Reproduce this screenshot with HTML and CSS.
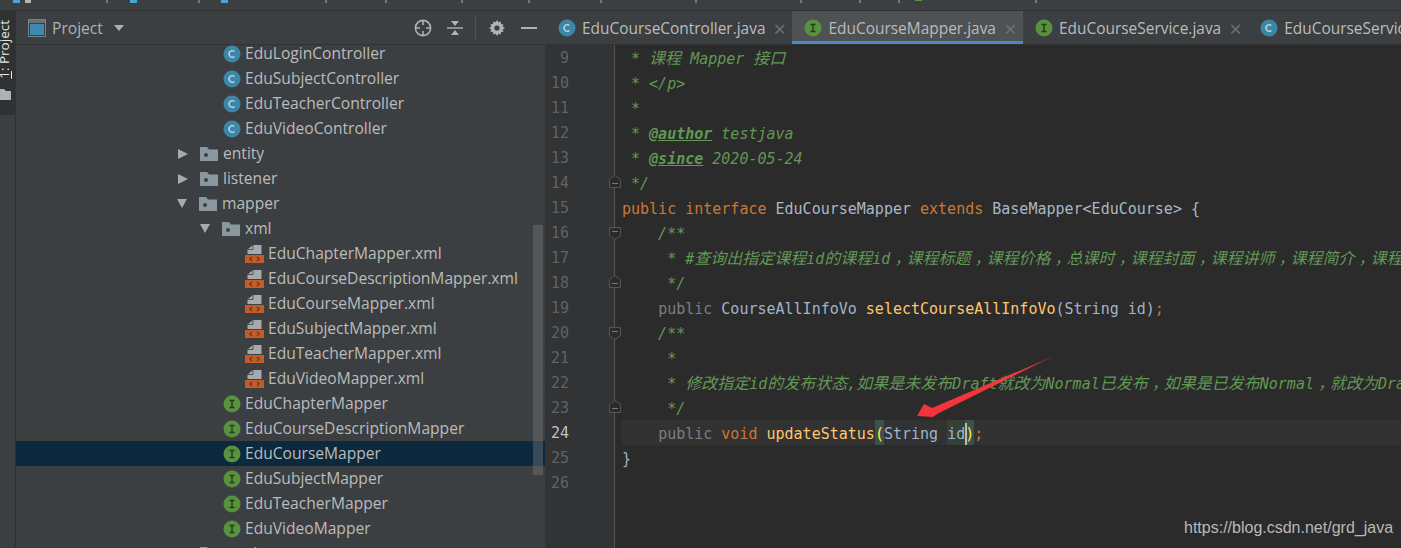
FILE: index.html
```html
<!DOCTYPE html>
<html>
<head>
  <title>EduCourseMapper.java</title>
  <meta charset="UTF-8" />
  <link rel="stylesheet" href="styles.css">
</head>
<body>

<svg class="defs" width="0" height="0">
  <symbol id="ic-c" viewBox="0 0 18 18">
    <circle cx="9" cy="9" r="8.5" fill="#3a87a8"/>
    <path d="M11.4 6.6 A3.2 3.2 0 1 0 11.4 11.4" fill="none" stroke="#c8d8de" stroke-width="1.3"/>
  </symbol>
  <symbol id="ic-i" viewBox="0 0 18 18">
    <circle cx="9" cy="9" r="8.5" fill="#5a913f"/>
    <path d="M6.5 5.5h5M6.5 12.5h5M9 5.5v7" fill="none" stroke="#1f3f14" stroke-width="1.4"/>
  </symbol>
  <symbol id="ic-pkg" viewBox="0 0 18 14">
    <path d="M0 0h7l2 2.5h9V14H0z" fill="#8b979e"/>
    <circle cx="6" cy="8" r="2" fill="#3c3f41"/>
  </symbol>
  <symbol id="ic-xml" viewBox="0 0 19 19">
    <path d="M2.5 10V5.5L8 1h8.500v9z" fill="#a6aaad"/>
    <path d="M2.500 5.500h5.500V1" fill="none" stroke="#3c3f41" stroke-width=".8"/>
    <rect x="0" y="11" width="19" height="8" fill="#c75a25"/>
    <path d="M7 12.800 4.800 15 7 17.200M12 12.800 14.200 15 12 17.200" fill="none" stroke="#3c3f41" stroke-width="1.200"/>
  </symbol>
  <symbol id="ic-fold-open" viewBox="0 0 12 13">
    <path d="M.5.5h11v8L6 12.500.5 8.500z" fill="#2b2b2b" stroke="#555" />
    <path d="M3 4.500h6" stroke="#777"/>
  </symbol>
  <symbol id="ic-fold-end" viewBox="0 0 12 13">
    <path d="M.5 12.500h11v-8L6 .5.5 4.500z" fill="#2b2b2b" stroke="#555" />
    <path d="M3 8.500h6" stroke="#777"/>
  </symbol>
</svg>

<div class="topbar"></div>

<div class="main">

  <div class="stripe">
    <div class="stripe-btn">
      <span class="stripe-label"><u>1</u>: Project</span>
      <svg class="stripe-folder" width="11" height="11" viewBox="0 0 11 11"><path d="M-2 0h6l2 2h5v9H-2z" fill="#afb1b3"/></svg>
    </div>
  </div>

  <div class="sidebar">
    <div class="side-head">
      <svg class="proj-icon" width="18" height="18" viewBox="0 0 18 18"><rect x=".5" y=".5" width="17" height="17" fill="#3c3f41" stroke="#7b8084"/><rect x="2" y="5" width="14" height="11" fill="#3d8aae"/><rect x="1" y="1" width="16" height="3" fill="#6b7074"/></svg>
      <span class="proj-name">Project</span>
      <span class="caret"></span>
      <span class="spacer"></span>
      <svg class="tool" width="18" height="18" viewBox="0 0 18 18"><circle cx="9" cy="9" r="7.600" fill="none" stroke="#afb1b3" stroke-width="1.600"/><path d="M9 1v5M9 12v5M1 9h5M12 9h5" stroke="#afb1b3" stroke-width="1.600"/></svg>
      <svg class="tool t2" width="16" height="18" viewBox="0 0 16 18"><path d="M0 9h16" stroke="#afb1b3" stroke-width="1.400"/><path d="M8 7 4 2h8zM8 11l-4 5h8z" fill="#afb1b3"/></svg>
      <span class="tool-sep"></span>
      <svg class="tool t3" width="16" height="16" viewBox="0 0 16 16"><path d="M8 0l1.400 2.300 2.300-.8.4 2.500 2.400.4-.8 2.300L16 8l-2.300 1.400.8 2.300-2.400.4-.4 2.400-2.300-.8L8 16l-1.400-2.300-2.300.8-.4-2.400-2.400-.4.8-2.300L0 8l2.300-1.400-.8-2.300L3.900 4l.4-2.500 2.300.8z" fill="#afb1b3"/><circle cx="8" cy="8" r="2.600" fill="#3c3f41"/></svg>
      <svg class="tool t4" width="16" height="18" viewBox="0 0 16 18"><path d="M0 9h16" stroke="#afb1b3" stroke-width="2"/></svg>
    </div>
    <div class="tree">
      <div class="row lv3"><svg class="ic"><use href="#ic-c"/></svg><span>EduLoginController</span></div>
      <div class="row lv3"><svg class="ic"><use href="#ic-c"/></svg><span>EduSubjectController</span></div>
      <div class="row lv3"><svg class="ic"><use href="#ic-c"/></svg><span>EduTeacherController</span></div>
      <div class="row lv3"><svg class="ic"><use href="#ic-c"/></svg><span>EduVideoController</span></div>
      <div class="row lv1"><b class="tri closed"></b><svg class="ic pk"><use href="#ic-pkg"/></svg><span>entity</span></div>
      <div class="row lv1"><b class="tri closed"></b><svg class="ic pk"><use href="#ic-pkg"/></svg><span>listener</span></div>
      <div class="row lv1"><b class="tri open"></b><svg class="ic pk"><use href="#ic-pkg"/></svg><span>mapper</span></div>
      <div class="row lv2"><b class="tri open"></b><svg class="ic pk"><use href="#ic-pkg"/></svg><span>xml</span></div>
      <div class="row lv4"><svg class="ic fx"><use href="#ic-xml"/></svg><span>EduChapterMapper.xml</span></div>
      <div class="row lv4"><svg class="ic fx"><use href="#ic-xml"/></svg><span>EduCourseDescriptionMapper.xml</span></div>
      <div class="row lv4"><svg class="ic fx"><use href="#ic-xml"/></svg><span>EduCourseMapper.xml</span></div>
      <div class="row lv4"><svg class="ic fx"><use href="#ic-xml"/></svg><span>EduSubjectMapper.xml</span></div>
      <div class="row lv4"><svg class="ic fx"><use href="#ic-xml"/></svg><span>EduTeacherMapper.xml</span></div>
      <div class="row lv4"><svg class="ic fx"><use href="#ic-xml"/></svg><span>EduVideoMapper.xml</span></div>
      <div class="row lv3"><svg class="ic"><use href="#ic-i"/></svg><span>EduChapterMapper</span></div>
      <div class="row lv3"><svg class="ic"><use href="#ic-i"/></svg><span>EduCourseDescriptionMapper</span></div>
      <div class="row lv3 selected"><svg class="ic"><use href="#ic-i"/></svg><span>EduCourseMapper</span></div>
      <div class="row lv3"><svg class="ic"><use href="#ic-i"/></svg><span>EduSubjectMapper</span></div>
      <div class="row lv3"><svg class="ic"><use href="#ic-i"/></svg><span>EduTeacherMapper</span></div>
      <div class="row lv3"><svg class="ic"><use href="#ic-i"/></svg><span>EduVideoMapper</span></div>
      <div class="row lv1"><b class="tri closed"></b><svg class="ic pk"><use href="#ic-pkg"/></svg><span>service</span></div>
    </div>
    <div class="scrollthumb"></div>
  </div>

  <div class="editor">
    <div class="tabs">
      <div class="tab"><svg class="ic"><use href="#ic-c"/></svg><span>EduCourseController.java</span><em class="x">×</em></div>
      <div class="tab active"><svg class="ic"><use href="#ic-i"/></svg><span>EduCourseMapper.java</span><em class="x">×</em></div>
      <div class="tab"><svg class="ic"><use href="#ic-i"/></svg><span>EduCourseService.java</span><em class="x">×</em></div>
      <div class="tab"><svg class="ic"><use href="#ic-c"/></svg><span>EduCourseServiceImpl.java</span></div>
    </div>
    <div class="code">
      <div class="line"><span class="num">9</span><pre class="doc"> * <span class="cjk">课程</span> Mapper <span class="cjk">接口</span></pre></div>
      <div class="line"><span class="num">10</span><pre class="doc"> * &lt;/p&gt;</pre></div>
      <div class="line"><span class="num">11</span><pre class="doc"> *</pre></div>
      <div class="line"><span class="num">12</span><pre class="doc"> * <span class="tag">@author</span> testjava</pre></div>
      <div class="line"><span class="num">13</span><pre class="doc"> * <span class="tag">@since</span> 2020-05-24</pre></div>
      <div class="line"><span class="num">14</span><svg class="fold"><use href="#ic-fold-end"/></svg><pre class="doc"> */</pre></div>
      <div class="line"><span class="num">15</span><pre><span class="kw">public interface</span> <span class="ty">EduCourseMapper</span> <span class="kw">extends</span> <span class="ty">BaseMapper&lt;EduCourse&gt; {</span></pre></div>
      <div class="line"><span class="num">16</span><svg class="fold open"><use href="#ic-fold-open"/></svg><pre class="doc">    /**</pre></div>
      <div class="line"><span class="num">17</span><pre class="doc">     * #<span class="cjk">查询出指定课程</span>id<span class="cjk">的课程</span>id<span class="cjk comma">，</span><span class="cjk">课程标题</span><span class="cjk comma">，</span><span class="cjk">课程价格</span><span class="cjk comma">，</span><span class="cjk">总课时</span><span class="cjk comma">，</span><span class="cjk">课程封面</span><span class="cjk comma">，</span><span class="cjk">课程讲师</span><span class="cjk comma">，</span><span class="cjk">课程简介</span><span class="cjk comma">，</span><span class="cjk">课程状态</span></pre></div>
      <div class="line"><span class="num">18</span><svg class="fold"><use href="#ic-fold-end"/></svg><pre class="doc">     */</pre></div>
      <div class="line"><span class="num">19</span><pre class="ty">    <span class="pub">public</span> CourseAllInfoVo <span class="fn">selectCourseAllInfoVo</span>(String id)<span class="semi">;</span></pre></div>
      <div class="line"><span class="num">20</span><svg class="fold open"><use href="#ic-fold-open"/></svg><pre class="doc">    /**</pre></div>
      <div class="line"><span class="num">21</span><pre class="doc">     *</pre></div>
      <div class="line"><span class="num">22</span><pre class="doc">     * <span class="cjk">修改指定</span>id<span class="cjk">的发布状态</span>,<span class="cjk">如果是未发布</span>Draft<span class="cjk">就改为</span>Normal<span class="cjk">已发布</span><span class="cjk comma">，</span><span class="cjk">如果是已发布</span>Normal<span class="cjk comma">，</span><span class="cjk">就改为</span>Draft</pre></div>
      <div class="line"><span class="num">23</span><svg class="fold"><use href="#ic-fold-end"/></svg><pre class="doc">     */</pre></div>
      <div class="line current"><span class="num">24</span><pre class="ty">    <span class="pub">public</span> <span class="kw">void</span> <span class="fn">updateStatus</span><span class="paren">(</span>String <span class="mark">id</span><span class="caret-bar"></span><span class="paren">)</span><span class="semi">;</span></pre></div>
      <div class="line"><span class="num">25</span><pre class="ty">}</pre></div>
      <div class="line"><span class="num">26</span><pre></pre></div>
    </div>
    <svg class="arrow" width="150" height="72" viewBox="0 0 150 72">
      <defs><linearGradient id="fade" x1="0" y1="1" x2="1" y2="0"><stop offset="0" stop-color="#f5323a"/><stop offset=".7" stop-color="#ee3a3f"/><stop offset="1" stop-color="#a8343a"/></linearGradient></defs>
      <path d="M2 66 9 54 17 58 139 6 22 64 18 67z" fill="url(#fade)"/>
    </svg>
    <div class="watermark">https://blog.csdn.net/grd_java</div>
  </div>

</div>

</body>
</html>
```

FILE: styles.css
```css
html, body {
  margin: 0;
  padding: 0;
  height: 100%;
  overflow: hidden;
  background: #3c3f41;
}
body {
  font-family: "Open Sans", "Noto Sans", sans-serif;
  font-size: 15.6px;
  color: #bbbbbb;
}
.defs { position: absolute; }

/* the breadcrumb row is cut off by the screenshot, only its last pixels show */
.topbar {
  height: 10px;
  border-bottom: 1px solid #323232;
  background-repeat: no-repeat;
  background-image:
    linear-gradient(#4aa6d8, #4aa6d8), linear-gradient(#b9b5ae, #b9b5ae),
    linear-gradient(#4aa6d8, #4aa6d8), linear-gradient(#4aa6d8, #4aa6d8),
    linear-gradient(#5a9a3c, #5a9a3c),
    linear-gradient(#777, #777), linear-gradient(#777, #777), linear-gradient(#777, #777),
    linear-gradient(#777, #777), linear-gradient(#777, #777), linear-gradient(#777, #777),
    linear-gradient(#777, #777), linear-gradient(#777, #777), linear-gradient(#777, #777),
    linear-gradient(#777, #777), linear-gradient(#777, #777), linear-gradient(#777, #777);
  background-size:
    7px 3px, 6px 3px, 7px 3px, 7px 3px, 7px 1px,
    2px 3px, 2px 3px, 2px 3px, 2px 3px, 2px 3px, 2px 3px,
    2px 3px, 2px 3px, 2px 3px, 2px 3px, 2px 3px, 2px 3px;
  background-position:
    13px 0, 25px 0, 130px 0, 221px 0, 915px 0,
    106px 0, 198px 0, 325px 0, 385px 0, 461px 0, 528px 0,
    600px 0, 695px 0, 800px 0, 859px 0, 898px 0, 1035px 0;
}

.main {
  display: flex;
  height: 537px;
}

/* left tool stripe */
.stripe {
  width: 15px;
  border-right: 1px solid #323232;
  flex: none;
}
.stripe-btn {
  height: 104px;
  background: #2f3133;
  position: relative;
  overflow: hidden;
}
.stripe-label {
  position: absolute;
  top: 9px;
  left: -3px;
  writing-mode: vertical-rl;
  transform: rotate(180deg);
  font-size: 13.500px;
  line-height: 14px;
  color: #e6e6e6;
  white-space: nowrap;
}
.stripe-folder { position: absolute; left: 0; top: 78px; }

/* project tree */
.sidebar {
  width: 529px;
  flex: none;
  position: relative;
  overflow: hidden;
}
.side-head {
  display: flex;
  align-items: center;
  height: 33px;
  padding: 0 8px 0 12px;
  border-bottom: 1px solid #323232;
  position: relative;
  z-index: 1;
  background: #3c3f41;
}
.proj-name { margin-left: 6px; color: #afb1b3; }
.caret {
  margin-left: 11px;
  border-left: 5.500px solid transparent;
  border-right: 5.500px solid transparent;
  border-top: 6px solid #afb1b3;
}
.spacer { flex: 1; }
.t2 { margin-left: 15px; }
.tool-sep { width: 1px; height: 24px; background: #505355; margin: 0 13px 0 12px; }
.t4 { margin-left: 16px; }

.tree { margin-top: -4px; }
.row {
  display: flex;
  align-items: center;
  height: 25px;
  white-space: nowrap;
}
.row span { margin-top: -2px; }
.row.selected { background: #0d293e; }
.lv1 { padding-left: 161px; }
.lv2 { padding-left: 184px; }
.lv3 { padding-left: 207px; }
.lv4 { padding-left: 229px; }
.ic { width: 18px; height: 18px; margin-right: 4px; flex: none; }
.ic.fx { width: 19px; height: 19px; }
.ic.pk { height: 14px; margin-right: 5px; }
.tri { flex: none; height: 0; width: 0; margin-right: 12px; }
.tri.closed {
  margin-left: 1px;
  border-left: 10px solid #a7a9ab;
  border-top: 5.500px solid transparent;
  border-bottom: 5.500px solid transparent;
}
.tri.open {
  border-top: 9px solid #a7a9ab;
  border-left: 5.500px solid transparent;
  border-right: 5.500px solid transparent;
}
.scrollthumb {
  position: absolute;
  right: 2px;
  top: 214px;
  width: 10px;
  height: 250px;
  background: rgba(120,120,120,.42);
}

/* editor */
.editor {
  flex: 1;
  min-width: 0;
  position: relative;
  overflow: hidden;
  background: #2b2b2b;
  display: flex;
  flex-direction: column;
}
.tabs {
  display: flex;
  flex: none;
  height: 33px;
  padding-left: 1px;
  background: #3c3f41;
  border-bottom: 1px solid #323232;
  white-space: nowrap;
  font-size: 15.450px;
}
.tab {
  display: flex;
  align-items: center;
  padding: 0 8px 0 12px;
  box-sizing: border-box;
  height: 33px;
  flex: none;
}
.tab .ic { margin-right: 6px; }
.tab.active {
  background: #4e5254;
  box-shadow: inset 0 -3px 0 #4a88c7;
}
.x {
  font-style: normal;
  font-size: 22px;
  line-height: 1;
  color: #6e7173;
  margin-left: 8px;
  width: 11px;
  text-align: center;
}

.code {
  flex: 1;
  background: linear-gradient(to right, #313335 69px, #555 69px, #555 70px, #2b2b2b 70px);
}
.line {
  display: flex;
  height: 25px;
  line-height: 25px;
  position: relative;
}
.line pre {
  margin: 0 0 0 7px;
  padding-top: 2px;
  box-sizing: border-box;
  height: 25px;
  font-family: "DejaVu Sans Mono", "Liberation Mono", "Noto Sans CJK TC", monospace;
  font-size: 15px;
  flex: 1;
  white-space: pre;
  color: #a9b7c6;
}
.num {
  width: 70px;
  box-sizing: border-box;
  padding-top: 1px;
  padding-right: 46px;
  text-align: right;
  flex: none;
  font-family: "DejaVu Sans Mono", monospace;
  font-size: 15px;
  color: #606366;
}
.fold {
  position: absolute;
  left: 64px;
  top: 5px;
  width: 12px;
  height: 13px;
}
.fold.open { top: 7px; }
.line .doc { color: #629755; font-style: italic; }
.cjk {
  font-family: "Noto Sans CJK SC", sans-serif;
  font-size: 16px;
  line-height: 1;
}
/* full width comma sits mid cell in the IDE font */
.comma { padding-left: 4px; letter-spacing: -4px; }
.tag { font-weight: bold; text-decoration: underline; }
.kw { color: #cc7832; }
.ty { color: #a9b7c6; }
.line pre.ty { color: #9fb4cc; }
.pub { color: #7b7d80; }
.fn { color: #ffc66d; }
.semi { color: #cc7832; }
.current pre { background: #323232; }
.current .num { color: #c0c2c4; }
.paren, .mark {
  display: inline-block;
  line-height: 21px;
  padding-top: 4px;
  margin-top: -4px;
}
.paren { color: #ffef28; background: #3b514d; }
.mark { background: #344134; }
.caret-bar {
  display: inline-block;
  position: relative;
  width: 2px;
  height: 22px;
  margin-right: -2px;
  vertical-align: -6px;
  background: #bbbbbb;
}

.arrow {
  position: absolute;
  left: 370px;
  top: 339px;
}
.watermark {
  position: absolute;
  left: 639px;
  top: 508px;
  font-family: "Liberation Sans", Arial, sans-serif;
  font-size: 16px;
  color: #b9b9b9;
  white-space: nowrap;
}
```
